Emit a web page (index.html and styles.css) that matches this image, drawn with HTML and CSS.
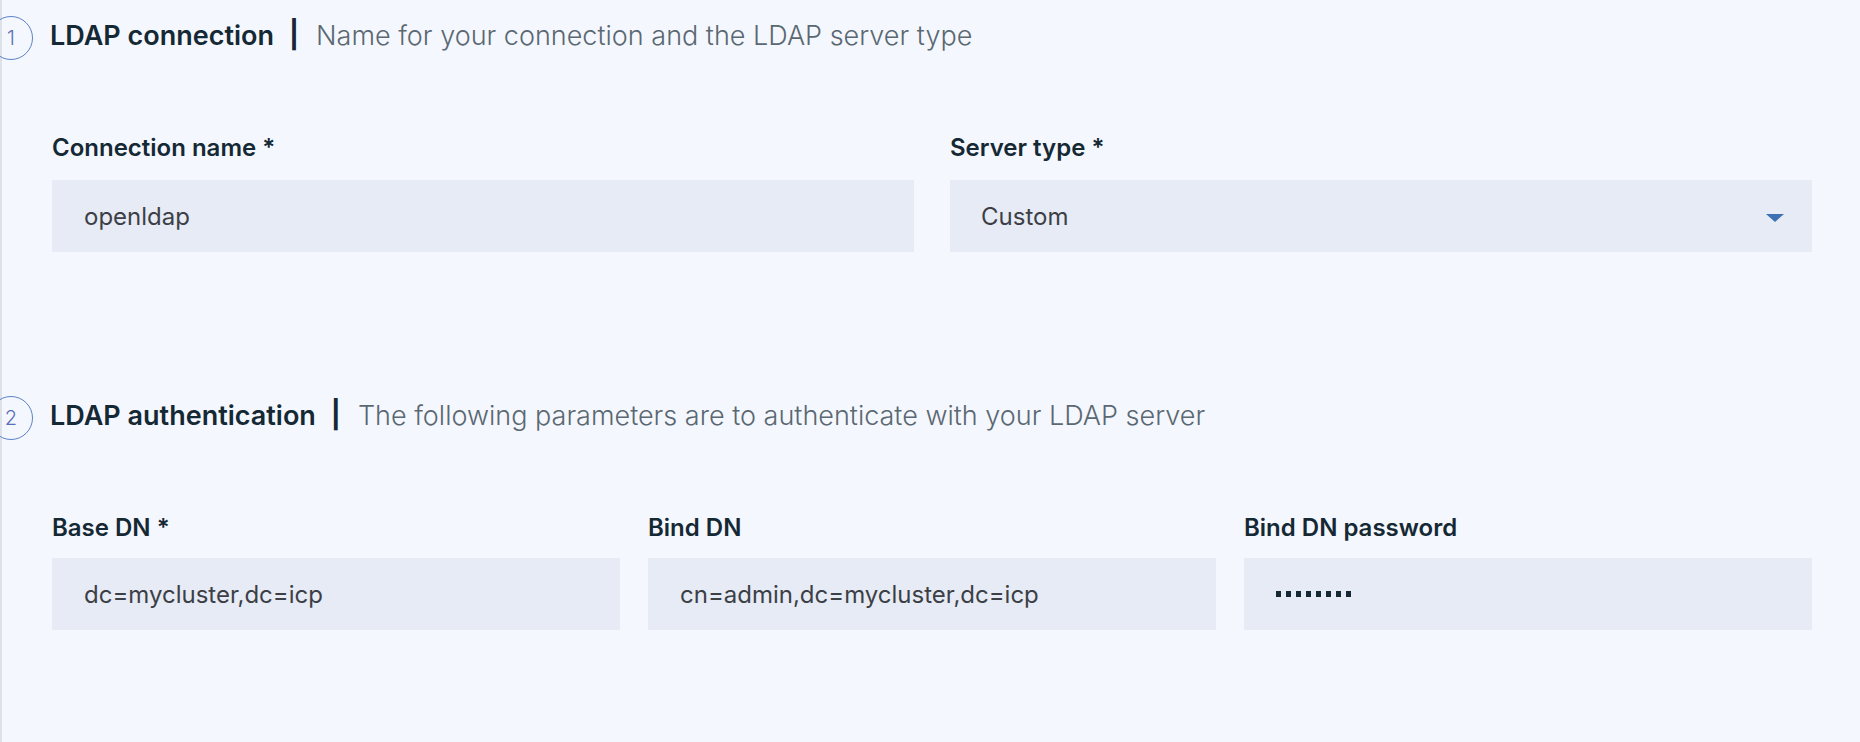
FILE: index.html
```html
<!DOCTYPE html>
<html lang="en">
<head>
<meta charset="utf-8">
<title>LDAP connection</title>
<link rel="stylesheet" href="styles.css">
</head>
<body>
<div class="page">
  <section class="step step-first">
    <header class="step-head">
      <span class="step-num">1</span>
      <h2 class="step-title">LDAP connection</h2>
      <span class="step-sep">|</span>
      <span class="step-desc">Name for your connection and the LDAP server type</span>
    </header>
    <div class="row row-2">
      <div class="field">
        <label class="field-label">Connection name *</label>
        <div class="input">openldap</div>
      </div>
      <div class="field">
        <label class="field-label">Server type *</label>
        <div class="input select">
          <span>Custom</span>
          <svg class="caret" width="18" height="8" viewBox="0 0 18 8"><path d="M0 0H18L9 8Z" fill="#3d70b2"/></svg>
        </div>
      </div>
    </div>
  </section>
  <section class="step step-second">
    <header class="step-head">
      <span class="step-num">2</span>
      <h2 class="step-title">LDAP authentication</h2>
      <span class="step-sep">|</span>
      <span class="step-desc">The following parameters are to authenticate with your LDAP server</span>
    </header>
    <div class="row row-3">
      <div class="field">
        <label class="field-label">Base DN *</label>
        <div class="input">dc=mycluster,dc=icp</div>
      </div>
      <div class="field">
        <label class="field-label">Bind DN</label>
        <div class="input">cn=admin,dc=mycluster,dc=icp</div>
      </div>
      <div class="field">
        <label class="field-label">Bind DN password</label>
        <div class="input password"><span class="dot"></span><span class="dot"></span><span class="dot"></span><span class="dot"></span><span class="dot"></span><span class="dot"></span><span class="dot"></span><span class="dot"></span></div>
      </div>
    </div>
  </section>
</div>
</body>
</html>
```

FILE: styles.css
```css
html, body {
  margin: 0;
  padding: 0;
  background: #f5f7fe;
}
body {
  font-family: "Inter", "Liberation Sans", sans-serif;
  color: #152935;
  overflow: hidden;
}
.page {
  border-left: 2px solid #dde2e8;
  min-height: 742px;
  box-sizing: border-box;
  padding: 16px 48px 0 0;
}
.step-second {
  margin-top: 144px;
}
.step-head {
  display: flex;
  align-items: flex-start;
  height: 44px;
}
.step-num {
  flex: none;
  width: 44px;
  height: 44px;
  box-sizing: border-box;
  margin-left: -13px;
  border: 1px solid #5b83c6;
  border-radius: 50%;
  display: flex;
  align-items: center;
  justify-content: center;
  font-size: 20px;
  font-weight: 300;
  color: #5b6fb8;
}
.step-title {
  margin: 5px 0 0 17px;
  font-size: 27px;
  line-height: 30px;
  font-weight: 600;
  color: #152935;
}
.step-sep {
  margin: 4px 0 0 15px;
  font-size: 27px;
  line-height: 30px;
  font-weight: 700;
  color: #152935;
}
.step-desc {
  margin: 5px 0 0 17px;
  font-size: 27px;
  line-height: 30px;
  font-weight: 300;
  color: #5a6872;
}
.row {
  display: grid;
  margin: 74px 0 0 50px;
}
.row-2 {
  grid-template-columns: 1fr 1fr;
  column-gap: 36px;
}
.row-3 {
  grid-template-columns: 1fr 1fr 1fr;
  column-gap: 28px;
}
.field {
  display: flex;
  flex-direction: column;
}
.field-label {
  font-size: 24px;
  line-height: 28px;
  font-weight: 600;
  color: #152935;
  margin-bottom: 18px;
}
.step-second .field-label {
  margin-bottom: 16px;
}
.input {
  height: 72px;
  box-sizing: border-box;
  padding: 0 28px 0 32px;
  background: #e6ebf6;
  display: flex;
  align-items: center;
  font-size: 24px;
  color: #3d3f46;
}
.select {
  justify-content: space-between;
  padding-left: 31px;
}
.caret {
  margin-top: 4px;
}
.password {
  gap: 5px;
  padding-left: 32px;
}
.dot {
  width: 5px;
  height: 6px;
  background: #152935;
}
```
